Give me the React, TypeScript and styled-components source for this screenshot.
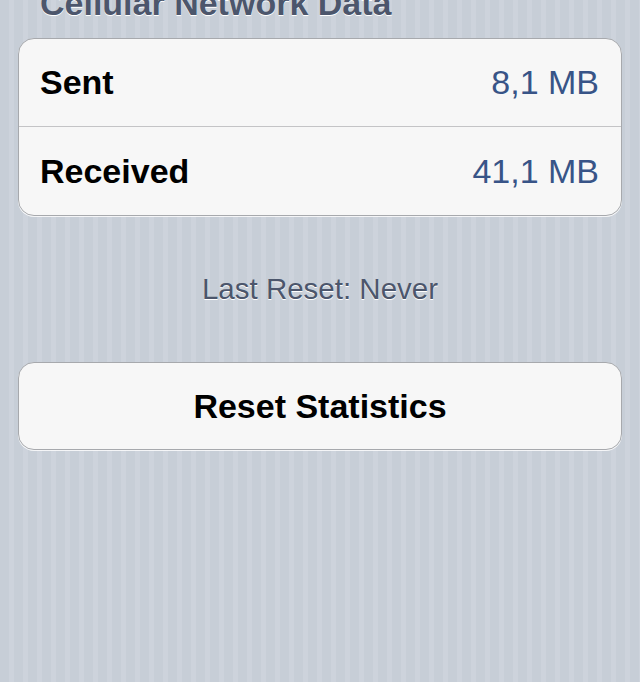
import React from "react";
import styled, { createGlobalStyle } from "styled-components";

const GlobalStyle = createGlobalStyle`
  html, body {
    margin: 0;
    padding: 0;
  }
  body {
    background-color: #c8cfd8;
    background-image: repeating-linear-gradient(
      90deg,
      #c7ced7 0px,
      #c7ced7 9px,
      #cdd3dc 9px,
      #cdd3dc 14px
    );
    font-family: "Liberation Sans", Arial, sans-serif;
    -webkit-font-smoothing: antialiased;
  }
`;

type Stat = { label: string; value: string };

const stats: Stat[] = [
  { label: "Sent", value: "8,1 MB" },
  { label: "Received", value: "41,1 MB" },
];

export default function App() {
  return (
    <>
      <GlobalStyle />
      <Screen>
        <SectionHeader>Cellular Network Data</SectionHeader>
        <Group>
          {stats.map((s, i) => (
            <Row key={s.label} $last={i === stats.length - 1}>
              <Label>{s.label}</Label>
              <Value>{s.value}</Value>
            </Row>
          ))}
        </Group>
        <Footer>Last Reset: Never</Footer>
        <ResetButton>Reset Statistics</ResetButton>
      </Screen>
    </>
  );
}

const Screen = styled.div`
  height: 682px;
  overflow: hidden;
  padding: 0 18px;
  box-sizing: border-box;
  display: flex;
  flex-direction: column;
`;

const SectionHeader = styled.div`
  margin: -14px 0 18px 22px;
  font-size: 34px;
  line-height: 34px;
  font-weight: 700;
  color: #4c566c;
  text-shadow: 0 1px 0 #ffffff;
`;

const Group = styled.div`
  background: #f7f7f7;
  border: 1px solid #a7a9ad;
  border-radius: 16px;
  box-shadow: 0 1px 0 rgba(255, 255, 255, 0.8);
  overflow: hidden;
`;

const Row = styled.div<{ $last: boolean }>`
  height: ${(p) => (p.$last ? 88 : 87)}px;
  display: flex;
  align-items: center;
  justify-content: space-between;
  padding: 0 22px 0 21px;
  border-bottom: ${(p) => (p.$last ? "none" : "1px solid #c4c4c6")};
`;

const Label = styled.div`
  font-size: 34px;
  font-weight: 700;
  color: #000000;
`;

const Value = styled.div`
  font-size: 34px;
  font-weight: 400;
  color: #385487;
`;

const Footer = styled.div`
  margin-top: 55px;
  text-align: center;
  font-size: 29.5px;
  line-height: 36px;
  color: #4c566c;
  text-shadow: 0 1px 0 #ffffff;
`;

const ResetButton = styled.div`
  margin-top: 55px;
  height: 88px;
  box-sizing: border-box;
  background: #f7f7f7;
  border: 1px solid #a7a9ad;
  border-radius: 16px;
  box-shadow: 0 1px 0 rgba(255, 255, 255, 0.8);
  display: flex;
  align-items: center;
  justify-content: center;
  font-size: 34px;
  font-weight: 700;
  color: #000000;
`;
